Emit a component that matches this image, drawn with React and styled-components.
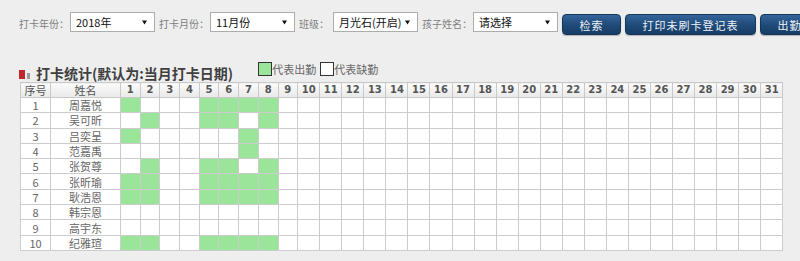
import styled, { createGlobalStyle } from "styled-components";

const GlobalStyle = createGlobalStyle`
  html, body {
    margin: 0;
    padding: 0;
    background: #eeeeee;
    overflow: hidden;
  }
  body {
    font-family: "Noto Sans CJK SC", "Noto Sans", sans-serif;
  }
`;

const Page = styled.div`
  width: 800px;
  height: 261px;
  padding-left: 19px;
  box-sizing: border-box;
`;

const Toolbar = styled.div`
  display: flex;
  align-items: flex-start;
  padding-top: 12px;
  white-space: nowrap;
  & > * {
    flex-shrink: 0;
  }
`;

const Label = styled.span`
  font-size: 10px;
  line-height: 20px;
  padding-top: 2px;
  color: #808080;
  margin-right: ${(p) => p.$gap || 1}px;
`;

const SelectBox = styled.div`
  width: 85px;
  height: 20px;
  box-sizing: border-box;
  border: 1px solid #acacac;
  background: #ffffff;
  display: flex;
  align-items: center;
  justify-content: space-between;
  padding: 0 7px 0 5px;
  margin-right: 4px;
  font-size: 11px;
  color: #111;
`;

const Arrow = styled.svg`
  width: 5px;
  height: 5px;
  flex-shrink: 0;
`;

const Button = styled.button`
  width: ${(p) => p.$w}px;
  height: 21px;
  margin: 2px 4px 0 0;
  padding: 0;
  border: 1px solid #163657;
  border-radius: 4px;
  background: linear-gradient(#33649a, #1f4a78 55%, #173c66);
  box-shadow: 0 1px 1px rgba(0, 0, 0, 0.25);
  color: #eef3f8;
  font-family: inherit;
  font-size: 11px;
  letter-spacing: 1px;
`;

const Header = styled.div`
  display: flex;
  align-items: flex-start;
  height: 22px;
  margin-top: 25px;
`;

const Title = styled.div`
  display: flex;
  align-items: center;
  margin-top: 4px;
  font-size: 14px;
  font-weight: bold;
  line-height: 18px;
  color: #404040;
`;

const Mark = styled.span`
  display: inline-block;
  width: ${(p) => p.$w}px;
  height: ${(p) => p.$h}px;
  background: ${(p) => p.$c};
  margin-right: ${(p) => p.$mr}px;
  align-self: flex-end;
  margin-bottom: 3px;
`;

const Legend = styled.div`
  display: flex;
  align-items: center;
  margin-left: 25px;
  margin-top: 1px;
  font-size: 11px;
  color: #666;
`;

const LegendBox = styled.span`
  display: inline-block;
  width: 14px;
  height: 14px;
  box-sizing: border-box;
  border: 1px solid #333;
  background: ${(p) => (p.$on ? "#9be59b" : "#ffffff")};
  margin-left: ${(p) => p.$ml || 0}px;
`;

const Table = styled.table`
  margin-left: 1px;
  width: 762.4px;
  table-layout: fixed;
  border-collapse: collapse;
  background: #ffffff;
`;

const Th = styled.th`
  width: ${(p) => p.$w - 1}px;
  height: 14px;
  padding: 0;
  border: 1px solid #c9c9c9;
  background: linear-gradient(#fbfbfb, #e9e9e9);
  color: #555;
  font-size: ${(p) => (p.$num ? 10 : 11)}px;
  font-family: ${(p) =>
    p.$num ? '"DejaVu Sans", sans-serif' : '"Noto Sans CJK SC", sans-serif'};
  font-weight: ${(p) => (p.$num ? "bold" : "normal")};
  line-height: 14px;
  text-align: center;
`;

const Td = styled.td`
  height: 14.3px;
  padding: 0;
  border: 1px solid #cccccc;
  background: ${(p) => (p.$on ? "#9be59b" : "#ffffff")};
  color: #666;
  font-size: 11px;
  line-height: 14px;
  text-align: center;
`;

const days = Array.from({ length: 31 }, (_, i) => i + 1);

const rows = [
  { name: "周嘉悦", on: [1, 5, 6, 7, 8] },
  { name: "吴可昕", on: [2, 5, 6, 8] },
  { name: "吕奕呈", on: [1, 7] },
  { name: "范嘉禹", on: [7] },
  { name: "张贺尊", on: [2, 5, 6, 8] },
  { name: "张昕瑜", on: [1, 2, 5, 6, 7, 8] },
  { name: "耿浩恩", on: [1, 2, 5, 6, 7, 8] },
  { name: "韩宗恩", on: [] },
  { name: "高宇东", on: [] },
  { name: "纪雅瑄", on: [1, 2, 5, 6, 7, 8] },
];

const Select = ({ value }) => (
  <SelectBox>
    <span>{value}</span>
    <Arrow viewBox="0 0 5 5">
      <path d="M0 0.5 H5 L2.5 4.5 Z" fill="#111" />
    </Arrow>
  </SelectBox>
);

export default function App() {
  return (
    <Page>
      <GlobalStyle />
      <Toolbar>
        <Label>打卡年份：</Label>
        <Select value="2018年" />
        <Label>打卡月份：</Label>
        <Select value="11月份" />
        <Label $gap={4}>班级：</Label>
        <Select value="月光石(开启)" />
        <Label>孩子姓名：</Label>
        <Select value="请选择" />
        <Button $w={59}>检索</Button>
        <Button $w={131}>打印未刷卡登记表</Button>
        <Button $w={59}>出勤</Button>
      </Toolbar>
      <Header>
        <Title>
          <Mark $w={6} $h={9} $c="#c1272d" $mr={2} />
          <Mark $w={3} $h={6} $c="#9a9a9a" $mr={6} />
          打卡统计(默认为:当月打卡日期)
        </Title>
        <Legend>
          <LegendBox $on />
          代表出勤
          <LegendBox $ml={4} />
          代表缺勤
        </Legend>
      </Header>
      <Table>
        <thead>
          <tr>
            <Th $w={30}>序号</Th>
            <Th $w={70}>姓名</Th>
            {days.map((d) => (
              <Th key={d} $num $w={d < 10 ? 19.7 : 22.05}>
                {d}
              </Th>
            ))}
          </tr>
        </thead>
        <tbody>
          {rows.map((r, i) => (
            <tr key={r.name}>
              <Td>{i + 1}</Td>
              <Td>{r.name}</Td>
              {days.map((d) => (
                <Td key={d} $on={r.on.includes(d)} />
              ))}
            </tr>
          ))}
        </tbody>
      </Table>
    </Page>
  );
}
